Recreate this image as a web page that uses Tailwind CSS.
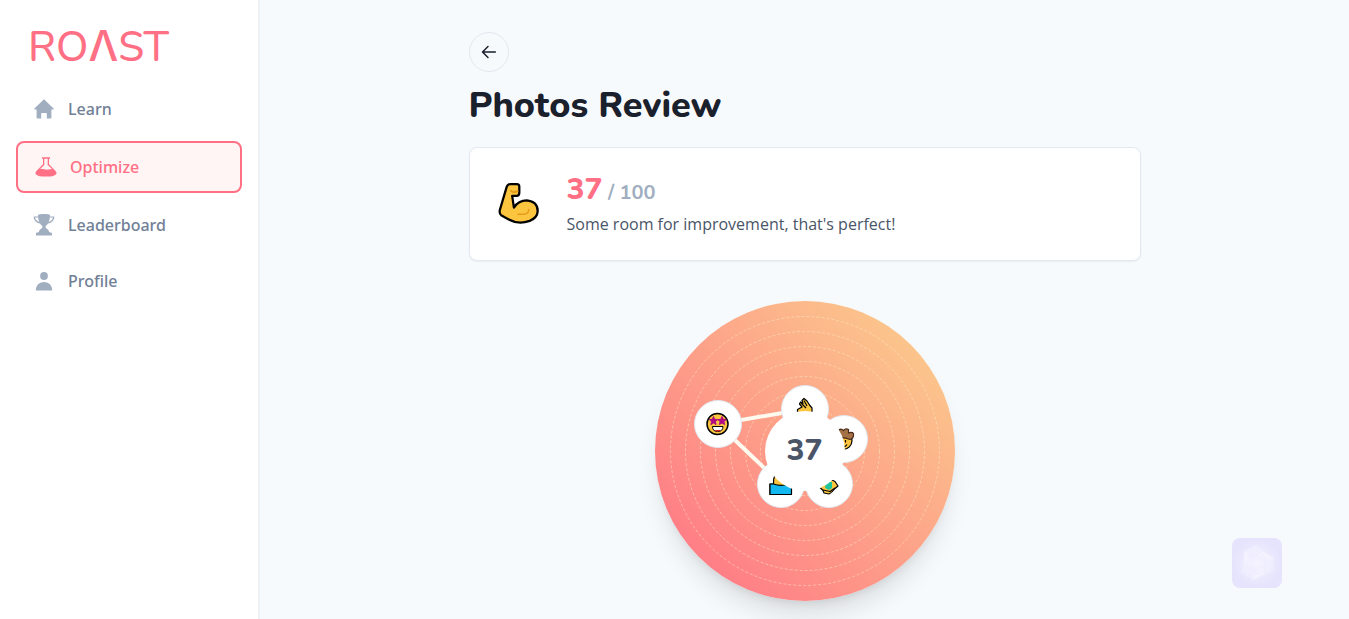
<!DOCTYPE html>
<html lang="en">
<head>
    <meta charset="UTF-8">
    <meta name="viewport" content="width=device-width, initial-scale=1.0">
    <title>Roast - Photos Review</title>
    <script src="https://cdn.jsdelivr.net/npm/@tailwindcss/browser@4"></script>
</head>
<body class="flex min-h-screen bg-[#f7fafc] font-['Open_Sans',sans-serif] text-[#4a5568]">

    <!-- Sidebar -->
    <aside class="w-[260px] shrink-0 border-r-2 border-[#edf2f7] bg-white">
        <a href="#" aria-label="ROAST" class="mx-7 mt-[30px] block font-['Nunito','Inter',sans-serif] text-[42px] leading-9 font-medium text-[#ff7085]">ROΛST</a>
        <nav class="mt-[19px] flex flex-col gap-2 px-4 font-['Noto_Sans',sans-serif] font-medium text-[#718096]">
            <a href="#" class="flex h-12 items-center gap-3 rounded-lg px-4">
                <svg class="size-6 text-[#a0aec0]" viewBox="0 0 24 24" fill="currentColor"><path d="M12 2.2 2.4 11.6Q2 12.4 3 12.5H4.6V20.5Q4.6 21.4 5.5 21.4H9.2V16.6Q9.2 16 9.8 16H14.2Q14.8 16 14.8 16.6V21.4H18.5Q19.4 21.4 19.4 20.5V12.5H21Q22 12.4 21.6 11.6Z"/></svg>
                Learn
            </a>
            <a href="#" class="flex h-[52px] items-center gap-3 rounded-lg border-2 border-[#ff7085] bg-[#fff5f5] px-4 text-[#ff7085]">
                <svg class="size-6" viewBox="0 0 24 24" fill="currentColor"><path fill-rule="evenodd" d="M8 2.3H16V3.7H15V9.3L21.8 16.2C23.6 18.5 22.6 21.6 12 21.6S.4 18.5 2.2 16.2L9 9.3V3.7H8ZM10.3 3.7V9.9L6 14.2C9.5 13.4 12 16 17.8 13.8L13.7 9.9V3.7Z"/></svg>
                Optimize
            </a>
            <a href="#" class="flex h-12 items-center gap-3 rounded-lg px-4">
                <svg class="size-6 text-[#a0aec0]" viewBox="0 0 24 24" fill="currentColor"><path fill-rule="evenodd" d="M6 2C7 .8 17 .8 18 2L17.9 3.4H22.3C22.3 7.5 19.8 9.7 16 10.5C15.2 12 13.5 12.6 13.5 13.7C13.5 15.7 16.8 16 17.2 19L20 20V22.5H4V20L6.8 19C7.2 16 10.5 15.7 10.5 13.7C10.5 12.6 8.8 12 8 10.5C4.2 9.7 1.7 7.5 1.7 3.4H6.1ZM3.1 4.6C3.4 7 5 8.3 7.3 9C6.5 7.5 6.3 6 6.2 4.6ZM20.9 4.6H17.8C17.7 6 17.5 7.5 16.7 9C19 8.3 20.6 7 20.9 4.6Z"/></svg>
                Leaderboard
            </a>
            <a href="#" class="flex h-12 items-center gap-3 rounded-lg px-4">
                <svg class="size-6 text-[#a0aec0]" viewBox="0 0 24 24" fill="currentColor"><circle cx="12" cy="7" r="3.9"/><path d="M3.8 21.4C3.8 10.2 20.2 10.2 20.2 21.4Z"/></svg>
                Profile
            </a>
        </nav>
    </aside>

    <!-- Content -->
    <main class="flex-1 px-8 pt-8">
        <div class="mx-auto max-w-2xl">
            <button type="button" aria-label="Back" class="flex size-10 items-center justify-center rounded-full border border-[#e2e8f0] text-[#1a202c]">
                <svg class="size-4" viewBox="0 0 16 16" fill="none" stroke="currentColor" stroke-width="1.5" stroke-linecap="round" stroke-linejoin="round"><path d="M14.3 8H1.5M7 2.5 1.5 8 7 13.5"/></svg>
            </button>
            <h1 class="mt-3 mb-[19px] font-['Nunito',sans-serif] text-4xl leading-11 font-extrabold text-[#1a202c]">Photos Review</h1>

            <!-- Score card -->
            <section class="flex items-center gap-6 rounded-lg border border-[#e2e8f0] bg-white p-6 shadow-xs">
                <svg class="size-[49px]" viewBox="0 4 48 48" stroke-linejoin="round" stroke-linecap="round">
                    <path d="M12.5 10.5Q13.5 8 16 8H22.5Q24.8 8 24.8 10.5V16.5Q24.8 19.5 22 19.5H17.8L19.5 31Q24 24 32 24Q42.8 25 42.8 34.5Q42.5 41 35 44Q24 48 14 42.5L7 38.5Q5 37 5.7 33.5Z" fill="#fcc540" stroke="#000" stroke-width="2.2"/>
                    <path d="M16.5 14.5Q18.5 17 23 15" fill="none" stroke="#e59e1b" stroke-width="2"/>
                    <path d="M23.5 37.5H30Q34 37 34 33" fill="none" stroke="#e59e1b" stroke-width="1.6"/>
                </svg>
                <div>
                    <p class="font-['Nunito',sans-serif] text-3xl leading-9 font-extrabold text-[#ff7085]">37<span class="text-xl font-bold text-[#a0aec0]"> / 100</span></p>
                    <p class="mt-1">Some room for improvement, that's perfect!</p>
                </div>
            </section>

            <!-- Radar chart -->
            <div class="relative mx-auto mt-10 size-[300px] rounded-full bg-linear-[45deg,#ff7085,#fbd38d] shadow-xl">
                <svg class="size-full" viewBox="0 0 300 300">
                    <g fill="none" stroke="#feebc8" stroke-opacity=".5" stroke-dasharray="3 2">
                        <circle cx="150" cy="150" r="134.5"/>
                        <circle cx="150" cy="150" r="119.5"/>
                        <circle cx="150" cy="150" r="104.5"/>
                        <circle cx="150" cy="150" r="89.5"/>
                        <circle cx="150" cy="150" r="74.5"/>
                        <circle cx="150" cy="150" r="59.5"/>
                        <circle cx="150" cy="150" r="44.5"/>
                    </g>
                    <path d="M150 108 189 138 174 183 126 183 63 123Z" fill="none" stroke="#fffaf0" stroke-width="4"/>
                    <g fill="#fff" stroke="#e2e8f0">
                        <circle cx="150" cy="108" r="23.5"/>
                        <circle cx="189" cy="138" r="23.5"/>
                        <circle cx="174" cy="183" r="23.5"/>
                        <circle cx="126" cy="183" r="23.5"/>
                        <circle cx="63" cy="123" r="23.5"/>
                    </g>
                    <g stroke="#000" stroke-width="1.2" stroke-linejoin="round">
                        <!-- ok hand -->
                        <path d="M142.5 112V108.5L147 106 144.5 103 145.5 101 148 102.5 147 99.5 149 97.5 152 100 154.5 104 157 107V114H143Z" fill="#fcc540"/>
                        <path d="M146 102 151 107M149 99.5 152 105" fill="none"/>
                        <!-- cowboy -->
                        <circle cx="188" cy="139.5" r="9" fill="#fcc540"/>
                        <path d="M177 135 184 129Q186 127 188.5 129.5Q190.5 127 193.5 128.5V132Q197 130.5 198.5 132.5Q199 137.5 195 138.5Q190 136 180 137Z" fill="#a57147" stroke="#4a2a18"/>
                        <path d="M187 145.5Q190 146.5 192 143.5" fill="none"/>
                        <path d="M190.5 139V141.5" fill="none"/>
                        <!-- yoga -->
                        <path d="M164.5 186 175 178 180 180.5 183 185 180 187.5Q177 191.5 174 193L169 192 168 189.5Z" fill="#fcc540"/>
                        <path d="M171 181H177V187L174 189 170 187Z" fill="#20c39b" stroke="none"/>
                        <path d="M168 189 175 190.5 180 187" fill="none"/>
                        <!-- bath -->
                        <path d="M115 183H118.5Q118 178 120 174H134L136 184V193.5H115Z" fill="#fcc540"/>
                        <path d="M115 183H118.5Q124 185 130 184H136.5V193.5H115Z" fill="#12b8ef"/>
                    </g>
                    <!-- star eyes -->
                    <circle cx="62.5" cy="123" r="10.5" fill="#fcc540" stroke="#000" stroke-width="1.5"/>
                    <path id="star" d="M58.5 115.5 59.7 118.3 62.7 118.6 60.4 120.6 61.1 123.6 58.5 122 55.9 123.6 56.6 120.6 54.3 118.6 57.3 118.3Z" fill="#b10a83" stroke="#b10a83"/>
                    <use href="#star" x="8.5"/>
                    <path d="M57.5 125.5H68Q68 130.5 62.7 130.5T57.5 125.5Z" fill="#fff" stroke="#000"/>
                    <path d="M59.5 129H66Q65 130.5 62.7 130.5T59.5 129Z" fill="#d8232a"/>
                </svg>
                <div class="absolute inset-[110px] flex items-center justify-center rounded-full bg-white font-['Nunito',sans-serif] text-3xl font-extrabold">37</div>
            </div>
        </div>
    </main>

    <!-- Floating widget -->
    <button type="button" aria-label="Open assistant" class="fixed right-[67px] bottom-[31px] size-[50px] rounded-lg bg-[#e6e3fd]">
        <svg class="size-full" viewBox="0 0 50 50">
            <defs>
                <radialGradient id="glow"><stop offset="0" stop-color="#fff" stop-opacity=".6"/><stop offset="1" stop-color="#fff" stop-opacity="0"/></radialGradient>
                <path id="blade" d="M12 13 25 6Q27 12 43 20L38 23 29 14 18 17V29L12 26Z" fill="#fff" fill-opacity=".2"/>
            </defs>
            <circle cx="25" cy="25" r="24" fill="url(#glow)"/>
            <use href="#blade"/>
            <use href="#blade" transform="rotate(120 25 25)"/>
            <use href="#blade" transform="rotate(240 25 25)"/>
        </svg>
    </button>

</body>
</html>
